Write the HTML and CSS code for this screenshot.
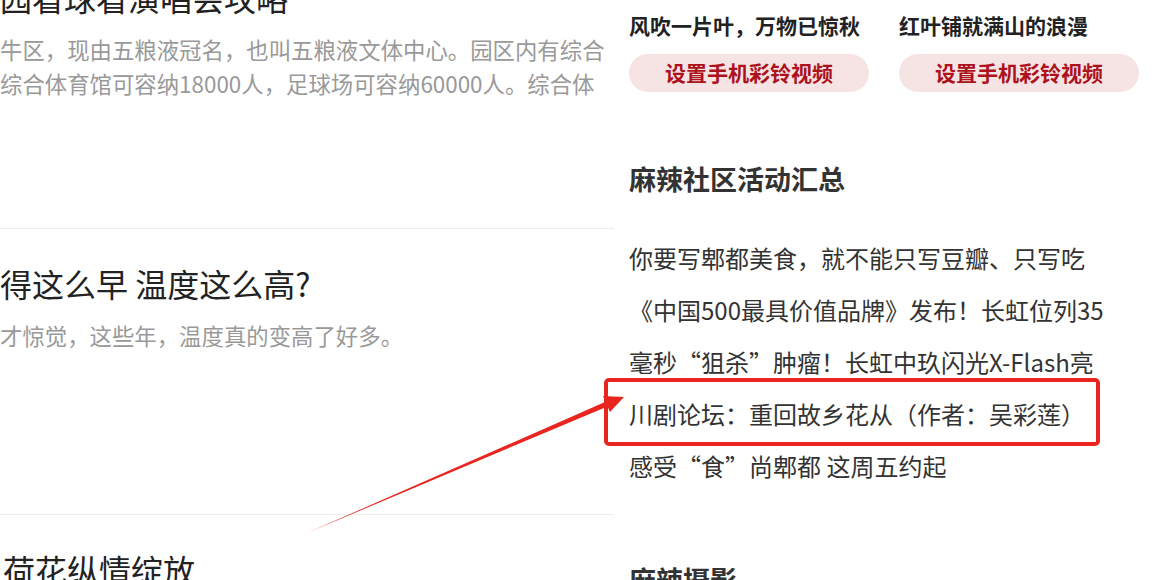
FILE: index.html
```html
<!DOCTYPE html>
<html lang="zh-CN">
<head>
    <meta charset="UTF-8">
    <meta name="viewport" content="width=device-width, initial-scale=1.0">
    <title>麻辣社区</title>
    <link rel="stylesheet" href="styles.css">
</head>
<body>
    <div class="page">
        <main class="feed">
            <article class="post">
                <h2 class="post-title">园看球看演唱会攻略</h2>
                <p class="post-desc">牛区，现由五粮液冠名，也叫五粮液文体中心。园区内有综合综合体育馆可容纳18000人，足球场可容纳60000人。综合体育馆还可以举办各类大型演出活动。</p>
            </article>
            <article class="post">
                <h2 class="post-title">得这么早 温度这么高?</h2>
                <p class="post-desc">才惊觉，这些年，温度真的变高了好多。</p>
            </article>
            <article class="post">
                <h2 class="post-title post-title-last">荷花纵情绽放</h2>
            </article>
        </main>

        <aside class="side">
            <div class="ring-cards">
                <div class="ring-card">
                    <div class="ring-title">风吹一片叶，万物已惊秋</div>
                    <a class="ring-btn" href="#">设置手机彩铃视频</a>
                </div>
                <div class="ring-card">
                    <div class="ring-title">红叶铺就满山的浪漫</div>
                    <a class="ring-btn" href="#">设置手机彩铃视频</a>
                </div>
            </div>

            <h3 class="side-head">麻辣社区活动汇总</h3>
            <ul class="side-list">
                <li>你要写郫都美食，就不能只写豆瓣、只写吃</li>
                <li>《中国500最具价值品牌》发布！长虹位列35</li>
                <li>毫秒“狙杀”肿瘤！长虹中玖闪光X-Flash亮</li>
                <li>川剧论坛：重回故乡花从（作者：吴彩莲）</li>
                <li>感受“食”尚郫都 这周五约起</li>
            </ul>

            <h3 class="side-head side-head-next">麻辣摄影</h3>
        </aside>

        <!-- annotation drawn over the page -->
        <svg class="mark" width="1165" height="580" viewBox="0 0 1165 580">
            <rect x="606" y="380" width="492" height="64" rx="3" fill="none" stroke="#e8261f" stroke-width="4"/>
            <polygon fill="#e8261f" points="307,533 605.5,401.8 603,396 624,397 610,412 607.5,406.4"/>
        </svg>
    </div>
</body>
</html>
```

FILE: styles.css
```css
* {
    box-sizing: border-box;
}
html, body {
    margin: 0;
    padding: 0;
    background: #fff;
    overflow: hidden;
}
body {
    font-family: "Noto Sans CJK SC", "Noto Sans", sans-serif;
    color: #333;
}
.page {
    position: relative;
    display: flex;
    width: 1165px;
    height: 580px;
    overflow: hidden;
}

/* left: article feed */
.feed {
    width: 614px;
    flex-shrink: 0;
    margin-top: -57px;
    overflow: hidden;
}
.post {
    height: 286px;
    padding-top: 34px;
    border-bottom: 1px solid #ececec;
}
.post-title {
    margin: 0;
    font-size: 32px;
    font-weight: normal;
    line-height: 40px;
    color: #222;
    white-space: nowrap;
}
.post-title-last {
    padding-left: 3px;
}
.post-desc {
    margin: 15px 0 0;
    width: 614px;
    max-height: 68px;
    font-size: 22.4px;
    line-height: 34px;
    color: #999;
    overflow: hidden;
}

/* right: sidebar */
.side {
    flex: 1;
    padding-left: 15px;
}
.ring-cards {
    display: flex;
    gap: 30px;
    padding-top: 10px;
}
.ring-card {
    width: 240px;
}
.ring-title {
    font-size: 21px;
    font-weight: bold;
    line-height: 30px;
    color: #222;
}
.ring-btn {
    display: block;
    margin-top: 14px;
    height: 38px;
    line-height: 37px;
    border-radius: 19px;
    background: #f6e3e3;
    color: #ad111b;
    font-size: 21px;
    font-weight: bold;
    text-align: center;
    text-decoration: none;
}
.side-head {
    margin: 67px 0 0;
    font-size: 27px;
    font-weight: bold;
    line-height: 40px;
    color: #333;
}
.side-head-next {
    margin-top: 68px;
}
.side-list {
    list-style: none;
    margin: 33px 0 0;
    padding: 0;
    width: 490px;
}
.side-list li {
    font-size: 24px;
    line-height: 52px;
    color: #333;
    white-space: nowrap;
    overflow: hidden;
}

.mark {
    position: absolute;
    left: 0;
    top: 0;
    pointer-events: none;
}
```
